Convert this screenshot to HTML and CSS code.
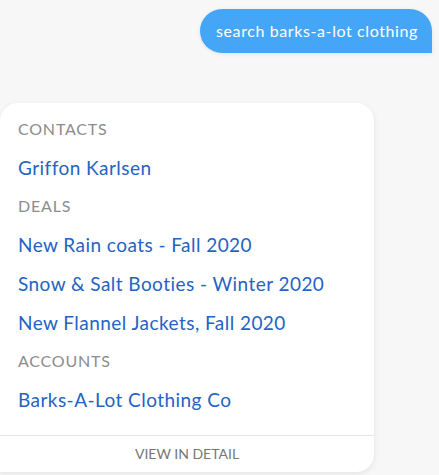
FILE: index.html
```html
<!DOCTYPE html>
<html>
<head>
<meta charset="utf-8">
<link rel="stylesheet" href="styles.css">
</head>
<body>
<div class="chat">
  <div class="row-user">
    <div class="bubble">search barks-a-lot clothing</div>
  </div>
  <div class="card">
    <div class="list">
      <div class="head">CONTACTS</div>
      <div class="item">Griffon Karlsen</div>
      <div class="head">DEALS</div>
      <div class="item">New Rain coats - Fall 2020</div>
      <div class="item">Snow &amp; Salt Booties - Winter 2020</div>
      <div class="item">New Flannel Jackets, Fall 2020</div>
      <div class="head">ACCOUNTS</div>
      <div class="item">Barks-A-Lot Clothing Co</div>
    </div>
    <div class="footer">VIEW IN DETAIL</div>
  </div>
</div>
</body>
</html>
```
FILE: styles.css
```css
html, body {
  margin: 0;
  padding: 0;
  background: #f7f7f7;
  font-family: "Lato", "Open Sans", sans-serif;
}
.chat {
  width: 439px;
  height: 475px;
  overflow: hidden;
}
.row-user {
  display: flex;
  justify-content: flex-end;
  padding: 9px 7px 0 0;
}
.bubble {
  background: #45a6f8;
  color: #fff;
  font-size: 16px;
  letter-spacing: 0.6px;
  height: 44px;
  line-height: 44px;
  padding: 0 14px 0 16px;
  border-radius: 22px 22px 0 22px;
  box-shadow: 0 1px 4px rgba(0,0,0,0.08);
}
.card {
  margin-top: 50px;
  width: 374px;
  height: 369px;
  background: #fff;
  border-radius: 18px 18px 18px 0;
  box-shadow: 0 2px 6px rgba(0,0,0,0.08);
  display: flex;
  flex-direction: column;
  box-sizing: border-box;
}
.list {
  flex: 1;
  padding: 7px 18px 0 18px;
}
.head {
  color: #8c8c8c;
  font-size: 16px;
  letter-spacing: 0.8px;
  height: 38px;
  line-height: 38px;
}
.item {
  color: #2463c4;
  font-size: 19px;
  letter-spacing: 0.45px;
  height: 39px;
  line-height: 39px;
}
.footer {
  border-top: 1px solid #e5e5e5;
  height: 36px;
  line-height: 36px;
  text-align: center;
  color: #777;
  font-size: 14px;
}
```
